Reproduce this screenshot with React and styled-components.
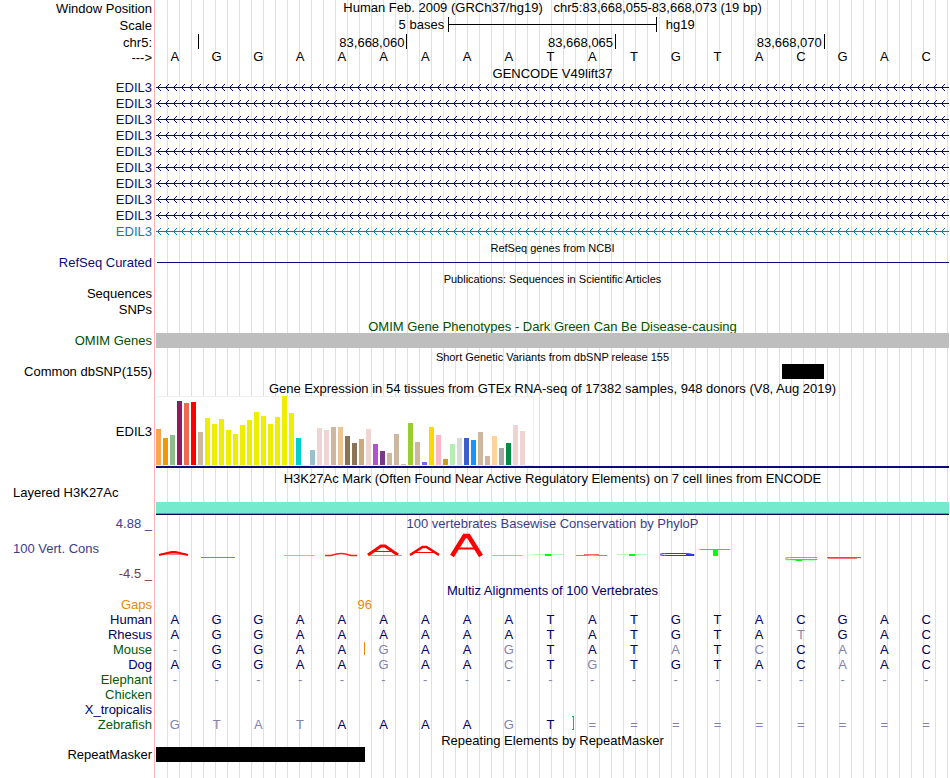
import React from "react";
import styled, { createGlobalStyle } from "styled-components";

const NAVY = "#0c0c78";
const DARK_BLUE = "#000064";
const GREEN = "#005a0a";
const ORANGE = "#e68a0a";

const GlobalStyle = createGlobalStyle`
  body {
    margin: 0;
    background: #fff;
    color: #000;
    font-family: "Liberation Sans", Arial, Helvetica, sans-serif;
    font-size: 13px;
  }
`;

const Browser = styled.main`
  box-sizing: border-box;
  min-height: 100vh;
  padding-right: 1px;
  background-color: #fff;
  background-image:
    linear-gradient(#ffb4b4, #ffb4b4),
    repeating-linear-gradient(to right, transparent 0 11px, #dcdcff 11px 12px);
  background-position: 154px 0, 156px 0;
  background-size: 1px 100%, 100% 100%;
  background-repeat: no-repeat;
`;

const Track = styled.div`
  display: grid;
  grid-template-columns: 152px minmax(0, 1fr);
  column-gap: 4px;
  height: ${(p) => p.$height || 16}px;
`;

const Label = styled.div`
  color: ${(p) => p.$color || "#000"};
  line-height: ${(p) => p.$line || 16}px;
  text-align: right;
  white-space: nowrap;
`;

const SideLabel = styled(Label)`
  padding-left: 13px;
  text-align: left;
`;

const Title = styled.h2`
  grid-column: 2;
  margin: 0;
  color: ${(p) => p.$color || "#000"};
  font-size: ${(p) => (p.$small ? 11 : 13)}px;
  font-weight: 400;
  line-height: ${(p) => p.$line || 16}px;
  text-align: center;
  white-space: pre;
`;

const ScaleRow = styled.div`
  display: grid;
  grid-template-columns: 7fr 5fr 7fr;
  line-height: 15px;
`;

const ScaleText = styled.span`
  padding: 0 4px 0 9px;
  text-align: ${(p) => p.$align};
`;

const ScaleBar = styled.span`
  display: flex;
  align-items: center;
  height: 15px;
  border: solid #000;
  border-width: 0 1px;

  &::before {
    content: "";
    flex: 1;
    height: 1px;
    background: #000;
  }
`;

const Ruler = styled.div`
  display: grid;
  grid-template-columns: 1fr 5fr 5fr 5fr 3fr;
`;

const RulerCell = styled.span`
  height: 15px;
  padding-right: 2px;
  border-left: 1px solid ${(p) => (p.$tick ? "#000" : "transparent")};
  line-height: 17px;
  text-align: right;
`;

const Bases = styled.div`
  display: grid;
  grid-template-columns: repeat(19, minmax(0, 1fr));
  line-height: ${(p) => p.$line || 15}px;
`;

const Base = styled.span`
  position: relative;
  padding-right: 4px;
  color: ${(p) => p.$color};
  text-align: center;
`;

const GapCount = styled.span`
  grid-column: 5 / 7;
  color: ${ORANGE};
  text-align: center;
`;

const Insertion = styled.i`
  position: absolute;
  top: 0;
  right: 0;
  width: 1px;
  height: 13px;
  background: ${ORANGE};
`;

const Break = styled.i`
  position: absolute;
  top: -1px;
  right: -1px;
  box-sizing: border-box;
  width: 2px;
  height: 14px;
  border: solid #00c832;
  border-width: 1px 1px 1px 0;
`;

const Strand = styled.svg`
  display: block;
  width: 100%;
  height: 16px;
`;

const IntronLine = styled.div`
  height: 1px;
  margin: 7px 0 0 1px;
  background: ${NAVY};
`;

const Items = styled.div`
  display: grid;
  grid-template-columns: repeat(19, minmax(0, 1fr));
`;

const Item = styled.div`
  grid-column: ${(p) => p.$span};
  height: 15px;
  background: ${(p) => p.$color || "#000"};
`;

const Expression = styled.div`
  border-bottom: 2px solid ${NAVY};
`;

const BarChart = styled.div`
  display: flex;
  align-items: flex-end;
  gap: 2px;
  box-sizing: border-box;
  width: 378px;
  height: 70px;
  border: solid #f0f0f0;
  border-width: 1px 1px 1px 0;
  background: #fff;
`;

const Bar = styled.div`
  flex: none;
  width: 5px;
  height: ${(p) => p.$value}px;
  background: ${(p) => p.$color};
`;

const Signal = styled.div`
  box-sizing: border-box;
  height: 13px;
  margin-top: 16px;
  border-bottom: 1px solid #0c0c50;
  background: linear-gradient(#76eacc 0 11px, #32aaaa 11px 12px);
`;

const ScoreAxis = styled.div`
  display: flex;
  flex-direction: column;
  justify-content: space-between;
`;

const Conservation = styled.div`
  display: flex;
  flex-direction: column;
`;

const ScorePlot = styled.svg`
  display: block;
  width: 100%;
  height: 50px;
`;

const PHRASE = "AGGAAAAAATATGTACGAC";

const genes = [...Array(9).fill(NAVY), "#1478b4"];

const species = [
  { name: "Human", color: DARK_BLUE, bases: PHRASE },
  { name: "Rhesus", color: DARK_BLUE, bases: "AGGAAAAAATATGTATGAC" },
  { name: "Mouse", color: GREEN, bases: "-GGAAGAAGTATATCCAAC", insertionAt: 4 },
  { name: "Dog", color: DARK_BLUE, bases: "AGGAAGAACTGTGTACAAC" },
  { name: "Elephant", color: GREEN, bases: "-------------------" },
  { name: "Chicken", color: GREEN, bases: "" },
  { name: "X_tropicalis", color: DARK_BLUE, bases: "" },
  { name: "Zebrafish", color: GREEN, bases: "GTATAAAAGT=========", breakAt: 9 },
];

const tan = "#cdb79e";
const pink = "#eed5d2";
const yellow = "#eeee00";
const expression = [
  [36, "#ffa54f"], [27, "#ee9a00"], [30, "#8fbc8f"], [64, "#8b1c62"],
  [62, "#ee6a50"], [63, "#ff0000"], [33, tan],
  ...[47, 41, 46, 35, 31, 40, 45, 53, 49, 41, 48, 69, 52].map((v) => [v, yellow]),
  [27, "#00cdcd"], [0, "#ee82ee"], [15, "#9ac0cd"], [37, pink], [35, pink],
  [38, tan], [38, "#eec591"], [29, "#8b7355"], [22, "#8b7355"], [26, "#cdaa7d"],
  [36, pink], [21, "#b452cd"], [14, "#7a378b"], [12, tan], [31, tan], [1, tan],
  [42, "#9acd32"], [23, tan], [3, "#7a67ee"], [38, "#ffd700"], [30, "#ffb6c1"],
  [6, "#cd9b1d"], [21, "#b4eeb4"], [27, "#d9d9d9"], [27, "#3a5fcd"],
  [25, "#1e90ff"], [33, tan], [9, tan], [29, "#ffd39b"], [17, "#a6a6a6"],
  [22, "#008b45"], [40, pink], [34, pink], [0, "#ff00ff"],
];

function GeneStrand({ color, id }) {
  return (
    <Strand aria-hidden="true" shapeRendering="crispEdges">
      <defs>
        <pattern id={id} width="8" height="16" patternUnits="userSpaceOnUse">
          <path
            d="M1 7h1v1h-1zM2 6h1v1h-1zM2 8h1v1h-1zM3 5h1v1h-1zM3 9h1v1h-1zM4 4h1v1h-1zM4 10h1v1h-1z"
            fill={color}
          />
        </pattern>
      </defs>
      <rect width="100%" height="16" fill={`url(#${id})`} />
      <rect y="7" width="100%" height="1" fill={color} />
    </Strand>
  );
}

function Peak({ x, width, top, bottom, bar, stroke }) {
  const mid = x + width / 2;
  const inset = ((bottom - bar) / (bottom - top)) * (width / 2);
  return (
    <g fill="none" stroke="#ff0000">
      <polyline
        points={`${x + 2},${bottom} ${mid - 2},${top + 1} ${mid + 2},${top + 1} ${x + width - 2},${bottom}`}
        strokeWidth={stroke}
      />
      <line x1={x + inset} x2={x + width - inset} y1={bar} y2={bar} strokeWidth={stroke > 3 ? 2 : 1} />
    </g>
  );
}

function PhyloP() {
  return (
    <ScorePlot viewBox="0 532 793 50" preserveAspectRatio="none" role="img" aria-label="Basewise conservation scores">
      <Peak x={1} width={33} top={551} bottom={555} bar={554} stroke={2} />
      <Peak x={210} width={34} top={545} bottom={555} bar={551.5} stroke={3} />
      <Peak x={252} width={33} top={546} bottom={555} bar={552.5} stroke={2.6} />
      <Peak x={294} width={33} top={535} bottom={556} bar={548.5} stroke={4.5} />
      <g fill="none" strokeWidth="1">
        <path d="M45 557.5h34" stroke="#7878ff" />
        <path d="M128 555.5h31M336 555.5h31" stroke="#ffa0a0" />
        <path d="M169 555.5h6q6-2 10-2t10 2h6" stroke="#ff1e1e" strokeWidth="1.4" />
        <path d="M214 555.5h32" stroke="#9696ff" />
        <path d="M420 555.5h9q8-1 14 0h8M428 554.5h15" stroke="#ff6464" />
        <path d="M377 554.5h30M461 554.5h30" stroke="#b4ffb4" />
        <path d="M528 553.5h-16q-8 0-8 1t8 1h26v-1h-8M528 553.5q6 0 9 1" stroke="#3232ff" />
        <path d="M544 549.5h30" stroke="#00ff00" />
        <path d="M661 557.5h-24q-8 0-8 1t8 1h24v-1" stroke="#aaaa1e" />
        <path d="M630 560.5h29" stroke="#c8ffc8" />
        <path d="M671 557.5h34" stroke="#6464ff" />
        <path d="M672 558.5h29" stroke="#ff7878" />
      </g>
      <path d="M389 554h6v2h-6zM473 554h6v2h-6zM557 549h5v7h-5zM640 560h6v1h-6z" fill="#00ff00" />
    </ScorePlot>
  );
}

function Alignment({ row }) {
  return (
    <Track $height={15}>
      <Label $color={row.color} $line={15}>{row.name}</Label>
      <Bases>
        {[...row.bases].map((base, i) => (
          <Base key={i} $color={base === PHRASE[i] ? DARK_BLUE : "#8282b0"}>
            {base}
            {row.insertionAt === i && <Insertion />}
            {row.breakAt === i && <Break />}
          </Base>
        ))}
      </Bases>
    </Track>
  );
}

function TrackTitle({ children, height = 15, line = height + 2, ...rest }) {
  return (
    <Track $height={height}>
      <Title $line={line} {...rest}>{children}</Title>
    </Track>
  );
}

export default function App() {
  return (
    <>
      <GlobalStyle />
      <Browser>
        <Track $height={17}>
          <Label $line={17}>Window Position</Label>
          <Title $line={15}>{"Human Feb. 2009 (GRCh37/hg19)   chr5:83,668,055-83,668,073 (19 bp)"}</Title>
        </Track>
        <Track $height={17}>
          <Label $line={17}>Scale</Label>
          <ScaleRow>
            <ScaleText $align="right">5 bases</ScaleText>
            <ScaleBar />
            <ScaleText $align="left">hg19</ScaleText>
          </ScaleRow>
        </Track>
        <Track>
          <Label $line={17}>chr5:</Label>
          <Ruler>
            <RulerCell />
            <RulerCell $tick>83,668,060</RulerCell>
            <RulerCell $tick>83,668,065</RulerCell>
            <RulerCell $tick>83,668,070</RulerCell>
            <RulerCell $tick />
          </Ruler>
        </Track>
        <Track>
          <Label>---&gt;</Label>
          <Bases $line={14}>
            {[...PHRASE].map((base, i) => (
              <Base key={i} $color="#000">{base}</Base>
            ))}
          </Bases>
        </Track>

        <TrackTitle height={14}>GENCODE V49lift37</TrackTitle>
        {genes.map((color, i) => (
          <Track key={i}>
            <Label $color={color}>EDIL3</Label>
            <GeneStrand color={color} id={`strand-${i}`} />
          </Track>
        ))}

        <TrackTitle $small>RefSeq genes from NCBI</TrackTitle>
        <Track>
          <Label $color={NAVY}>RefSeq Curated</Label>
          <IntronLine />
        </Track>

        <TrackTitle $small>Publications: Sequences in Scientific Articles</TrackTitle>
        <Track>
          <Label>Sequences</Label>
        </Track>
        <Track>
          <Label>SNPs</Label>
        </Track>

        <TrackTitle $color="#005000">OMIM Gene Phenotypes - Dark Green Can Be Disease-causing</TrackTitle>
        <Track>
          <Label $color="#005000">OMIM Genes</Label>
          <Items>
            <Item $span="1 / -1" $color="#bebebe" />
          </Items>
        </Track>

        <TrackTitle $small>Short Genetic Variants from dbSNP release 155</TrackTitle>
        <Track>
          <Label>Common dbSNP(155)</Label>
          <Items>
            <Item $span="16" />
          </Items>
        </Track>

        <TrackTitle height={16}>Gene Expression in 54 tissues from GTEx RNA-seq of 17382 samples, 948 donors (V8, Aug 2019)</TrackTitle>
        <Track $height={72}>
          <Label $line={72}>EDIL3</Label>
          <Expression>
            <BarChart>
              {expression.map(([value, color], i) => (
                <Bar key={i} $value={value} $color={color} />
              ))}
            </BarChart>
          </Expression>
        </Track>

        <TrackTitle height={18} line={22}>H3K27Ac Mark (Often Found Near Active Regulatory Elements) on 7 cell lines from ENCODE</TrackTitle>
        <Track $height={30}>
          <SideLabel $line={14}>Layered H3K27Ac</SideLabel>
          <Signal />
        </Track>

        <Track $height={66}>
          <ScoreAxis>
            <Label $color="#3c3c8c">4.88 _</Label>
            <SideLabel $color="#3c3c8c">100 Vert. Cons</SideLabel>
            <Label $color="#783c3c">-4.5 _</Label>
          </ScoreAxis>
          <Conservation>
            <Title $color="#3c3c8c">100 vertebrates Basewise Conservation by PhyloP</Title>
            <PhyloP />
          </Conservation>
        </Track>

        <TrackTitle $color={DARK_BLUE}>Multiz Alignments of 100 Vertebrates</TrackTitle>
        <Track $height={15}>
          <Label $color={ORANGE} $line={15}>Gaps</Label>
          <Bases>
            <GapCount>96</GapCount>
          </Bases>
        </Track>
        {species.map((row) => (
          <Alignment key={row.name} row={row} />
        ))}

        <TrackTitle>Repeating Elements by RepeatMasker</TrackTitle>
        <Track>
          <Label>RepeatMasker</Label>
          <Items>
            <Item $span="1 / 6" />
          </Items>
        </Track>
      </Browser>
    </>
  );
}
